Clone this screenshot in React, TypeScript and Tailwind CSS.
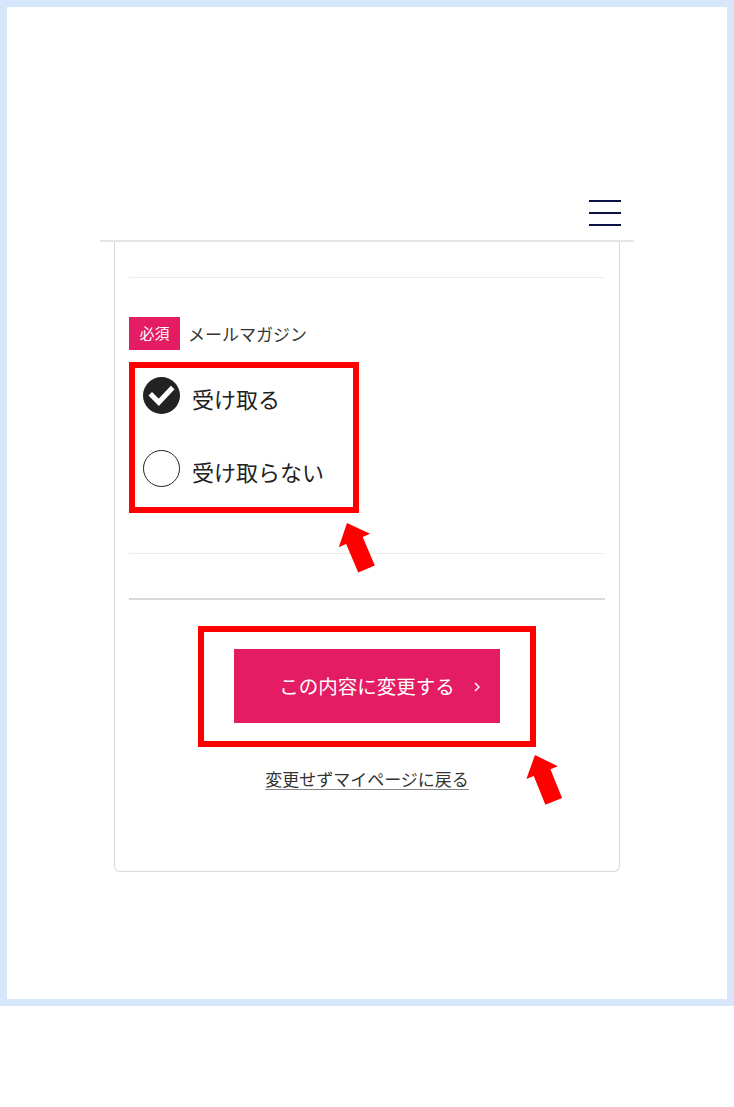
import { useState } from "react"

const options = [
  { value: "yes", label: "受け取る" },
  { value: "no", label: "受け取らない" },
]

function RadioMark({ checked }: { checked: boolean }) {
  if (checked) {
    return (
      <svg width="37" height="37" viewBox="0 0 37 37" className="shrink-0">
        <circle cx="18.5" cy="18.5" r="18.5" fill="#222" />
        <path d="M9 18.5l6.8 6.8 12.2-13" fill="none" stroke="#fff" strokeWidth="5" strokeLinecap="square" />
      </svg>
    )
  }
  return <span className="block h-[37px] w-[37px] shrink-0 rounded-full border-[1.5px] border-[#222] bg-white" />
}

function Arrows() {
  const shape = "0,0 17,19 9,19 9,50 -9,50 -9,19 -17,19"
  return (
    <svg width="734" height="1107" className="pointer-events-none absolute left-0 top-0">
      <polygon points={shape} fill="#ff0000" transform="translate(347 523) rotate(-23)" />
      <polygon points={shape} fill="#ff0000" transform="translate(535 755) rotate(-22)" />
    </svg>
  )
}

export default function App() {
  const [magazine, setMagazine] = useState("yes")

  return (
    <div className="relative h-[1107px] w-[734px] bg-white font-['Noto_Sans_CJK_JP','Noto_Sans',sans-serif] text-[#333]">
      <div className="h-[1006px] w-[734px] border-[7px] border-[#d6e6fb]">
        <header className="mx-auto flex h-[235px] w-[534px] items-end justify-end border-b-2 border-[#e6e6e6] pb-[14px] pr-[13px]">
          <button className="flex w-[32px] flex-col gap-[10px]" aria-label="menu">
            <span className="block h-[2px] bg-[#0b1145]" />
            <span className="block h-[2px] bg-[#0b1145]" />
            <span className="block h-[2px] bg-[#0b1145]" />
          </button>
        </header>

        <div className="mx-auto w-[506px] rounded-b-[6px] border-x border-b border-[#d9d9d9] px-[14px] pb-[80px] pt-[35px]">
          <div className="h-px bg-[#ececec]" />

          <div className="mt-[39px] flex items-center">
            <span className="flex h-[33px] w-[51px] items-center justify-center bg-[#e31c63] text-[15px] text-white">必須</span>
            <span className="ml-[8px] text-[17px] leading-none">メールマガジン</span>
          </div>

          <div className="mt-[12px] flex w-[230px] flex-col gap-[36px] border-[6px] border-[#ff0000] pb-[20px] pl-[8px] pt-[9px]">
            {options.map((o) => (
              <label key={o.value} className="flex h-[37px] cursor-pointer items-center gap-[12px]" onClick={() => setMagazine(o.value)}>
                <RadioMark checked={magazine === o.value} />
                <span className="pt-[4px] text-[22px] leading-none text-[#222]">{o.label}</span>
              </label>
            ))}
          </div>

          <div className="mt-[40px] h-px bg-[#ececec]" />
          <div className="mt-[44px] h-[2px] bg-[#dadada]" />

          <div className="mt-[26px] flex justify-center">
            <div className="border-[6px] border-[#ff0000] px-[30px] pb-[18px] pt-[17px]">
              <button className="relative flex h-[74px] w-[266px] items-center justify-center bg-[#e31c63] text-[19.5px] text-white">
                この内容に変更する
                <svg width="6" height="10" viewBox="0 0 6 10" className="absolute right-[20px] top-[33px]">
                  <path d="M1 1l4 4-4 4" fill="none" stroke="#fff" strokeWidth="1.5" />
                </svg>
              </button>
            </div>
          </div>

          <div className="mt-[20px] text-center text-[17px] leading-[24px]">
            <a href="#" className="text-[#333] underline decoration-[#888] underline-offset-[3px]">変更せずマイページに戻る</a>
          </div>
        </div>
      </div>
      <Arrows />
    </div>
  )
}
